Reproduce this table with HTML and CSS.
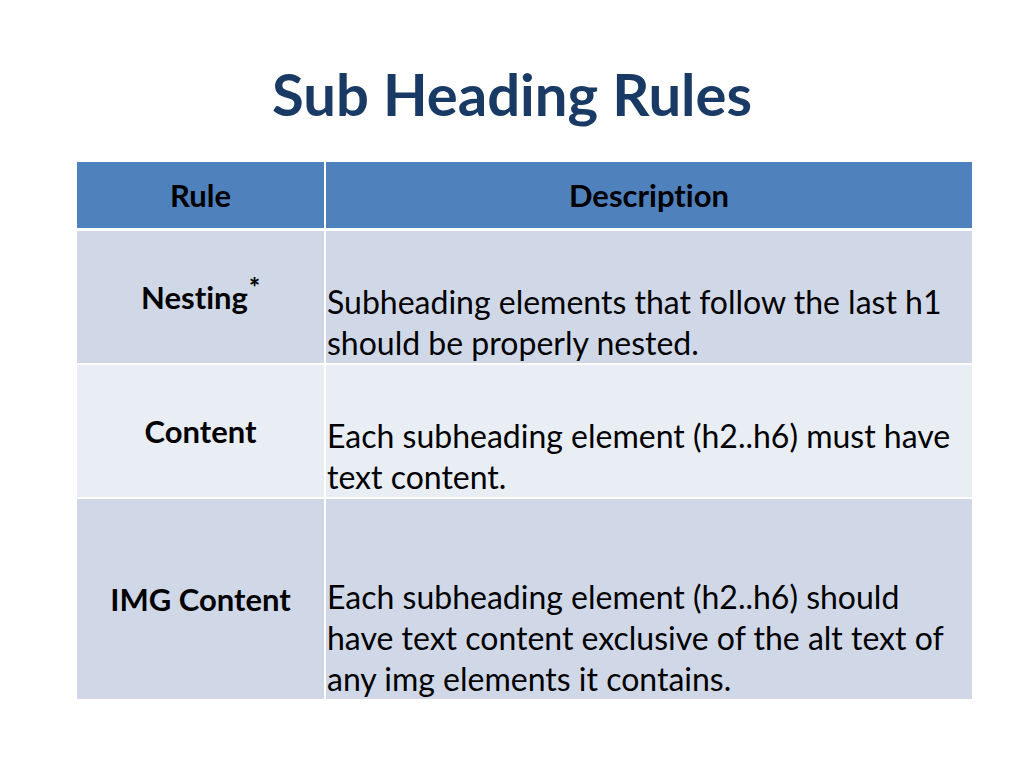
FILE: index.html
```html
<!DOCTYPE html>
<html>
<head>
<meta charset="utf-8">
<link rel="stylesheet" href="styles.css">
</head>
<body>
<div class="slide">
  <h1 class="title">Sub Heading Rules</h1>
  <table class="rules">
    <thead>
      <tr class="head-row">
        <th class="col-rule">Rule</th>
        <th class="col-desc">Description</th>
      </tr>
    </thead>
    <tbody>
      <tr class="row row-a row-short">
        <td class="rule">Nesting<sup class="star">*</sup></td>
        <td class="desc">Subheading elements that follow the last h1 should be properly nested.</td>
      </tr>
      <tr class="row row-b row-short">
        <td class="rule">Content</td>
        <td class="desc">Each subheading element (h2..h6) must have text content.</td>
      </tr>
      <tr class="row row-a row-tall">
        <td class="rule">IMG Content</td>
        <td class="desc">Each subheading element (h2..h6) should have text content exclusive of the alt text of any img elements it contains.</td>
      </tr>
    </tbody>
  </table>
</div>
</body>
</html>
```
FILE: styles.css
```css
html, body {
  margin: 0;
  padding: 0;
  background: #ffffff;
}
.slide {
  width: 1024px;
  height: 768px;
  font-family: Lato, "Open Sans", sans-serif;
  font-variant-ligatures: none;
  color: #000;
  padding-top: 56px;
  box-sizing: border-box;
}
.title {
  margin: 0;
  text-align: center;
  font-weight: 700;
  font-size: 58px;
  line-height: 76px;
  color: #1a3a66;
}
.rules {
  margin: 30px 0 0 77px;
  width: 895px;
  border-collapse: collapse;
  table-layout: fixed;
}
.col-rule { width: 247px; }
.head-row th {
  height: 66px;
  padding: 0;
  background: #4f81bd;
  font-weight: 700;
  font-size: 31px;
  text-align: center;
  vertical-align: middle;
  border-bottom: 3px solid #fff;
}
.col-rule { border-right: 2px solid #fff; }
.row td {
  padding: 0;
  border-top: 2px solid #fff;
}
.head-row + .row td { border-top: 0; }
.row td.rule {
  border-right: 2px solid #fff;
  text-align: center;
  vertical-align: middle;
  font-weight: 700;
  font-size: 31px;
}
.row td.desc {
  vertical-align: bottom;
  font-size: 32px;
  line-height: 41px;
  padding: 0 14px 0 1px;
}
.row-a td { background: #d0d8e8; }
.row-b td { background: #e9edf4; }
.row-short { height: 134px; }
.row-tall { height: 201px; }
.star {
  font-size: 26px;
  font-weight: 900;
  vertical-align: 0;
  position: relative;
  top: -12px;
  margin-left: 1px;
}
```
